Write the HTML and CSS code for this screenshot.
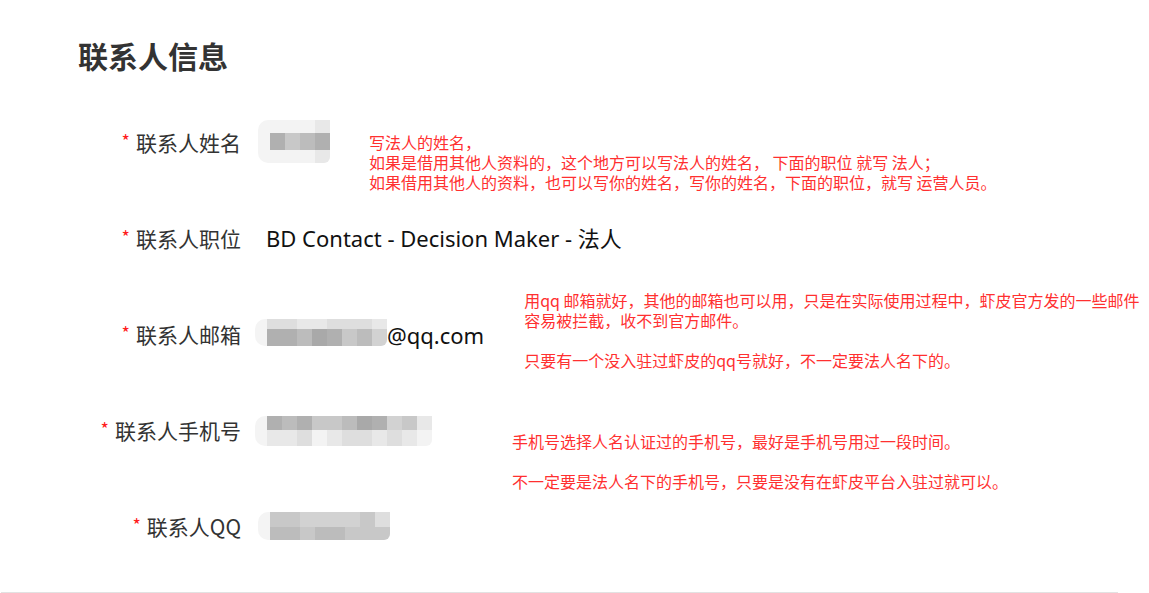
FILE: index.html
```html
<!DOCTYPE html>
<html lang="zh-CN">
<head>
<meta charset="utf-8">
<title>联系人信息</title>
<link rel="stylesheet" href="styles.css">
</head>
<body>
<div class="page">
  <h1 class="title">联系人信息</h1>

  <div class="row">
    <div class="label"><span class="req">*</span>联系人姓名</div>
    <div class="mosaic mosaic-name">
      <span class="lead"></span>
      <div class="cells cols-4">
        <i class="s9"></i><i class="s9"></i><i class="s9"></i><i class="s8"></i>
        <i class="s3"></i><i class="s5"></i><i class="s4"></i><i class="s3"></i>
        <i class="s9"></i><i class="s9"></i><i class="s9"></i><i class="s8"></i>
      </div>
    </div>
    <div class="note note-name">写法人的姓名，<br>如果是借用其他人资料的，这个地方可以写法人的姓名， 下面的职位 就写 法人；<br>如果借用其他人的资料，也可以写你的姓名，写你的姓名，下面的职位，就写 运营人员。</div>
  </div>

  <div class="row">
    <div class="label"><span class="req">*</span>联系人职位</div>
    <div class="value value-title">BD Contact - Decision Maker - 法人</div>
  </div>

  <div class="row">
    <div class="label"><span class="req">*</span>联系人邮箱</div>
    <div class="email">
      <div class="mosaic mosaic-email">
        <span class="lead"></span>
        <div class="cells cols-8 rows-email">
          <i class="s7"></i><i class="s7"></i><i class="s8"></i><i class="s8"></i><i class="s7"></i><i class="s7"></i><i class="s7"></i><i class="s8"></i>
          <i class="s3"></i><i class="s3"></i><i class="s4"></i><i class="s2"></i><i class="s3"></i><i class="s5"></i><i class="s4"></i><i class="s6"></i>
        </div>
      </div>
      <span class="value">@qq.com</span>
    </div>
    <div class="note note-email">用qq 邮箱就好，其他的邮箱也可以用，只是在实际使用过程中，虾皮官方发的一些邮件<br>容易被拦截，收不到官方邮件。<br><br>只要有一个没入驻过虾皮的qq号就好，不一定要法人名下的。</div>
  </div>

  <div class="row">
    <div class="label label-wide"><span class="req">*</span>联系人手机号</div>
    <div class="mosaic mosaic-phone">
      <span class="lead"></span>
      <div class="cells cols-11 rows-phone">
        <i class="s3"></i><i class="s4"></i><i class="s3"></i><i class="s5"></i><i class="s5"></i><i class="s4"></i><i class="s2"></i><i class="s3"></i><i class="s6"></i><i class="s5"></i><i class="s8"></i>
        <i class="s8"></i><i class="s8"></i><i class="s7"></i><i class="s9"></i><i class="s8"></i><i class="s7"></i><i class="s7"></i><i class="s8"></i><i class="s7"></i><i class="s8"></i><i class="s9"></i>
      </div>
    </div>
    <div class="note note-phone">手机号选择人名认证过的手机号，最好是手机号用过一段时间。<br><br>不一定要是法人名下的手机号，只要是没有在虾皮平台入驻过就可以。</div>
  </div>

  <div class="row">
    <div class="label"><span class="req">*</span>联系人QQ</div>
    <div class="mosaic mosaic-qq">
      <span class="lead"></span>
      <div class="cells cols-8 rows-qq">
        <i class="s5"></i><i class="s5"></i><i class="s6"></i><i class="s6"></i><i class="s6"></i><i class="s6"></i><i class="s5"></i><i class="s7"></i>
        <i class="s4"></i><i class="s4"></i><i class="s5"></i><i class="s4"></i><i class="s4"></i><i class="s5"></i><i class="s5"></i><i class="s5"></i>
      </div>
    </div>
  </div>
</div>
</body>
</html>
```

FILE: styles.css
```css
html, body {
  margin: 0;
  padding: 0;
  background: #fff;
  overflow: hidden;
}

.page {
  width: 1117px;
  height: 593px;
  margin-left: 1px;
  box-sizing: border-box;
  border-bottom: 1px solid #e2e2e2;
  font-family: "Noto Sans CJK SC", "Noto Sans", sans-serif;
  color: #333;
}

.title {
  margin: 0 0 0 77px;
  padding-top: 40px;
  height: 94px;
  box-sizing: border-box;
  font-size: 30px;
  line-height: 30px;
  font-weight: 700;
  color: #333;
}

.row {
  height: 96px;
  display: flex;
  align-items: center;
}

.label {
  width: 240px;
  flex: none;
  text-align: right;
  font-size: 21px;
  line-height: 28px;
  color: #333;
  white-space: nowrap;
}

.req {
  color: #ff1a1a;
  font-size: 18px;
  margin-right: 6px;
  position: relative;
  top: -3px;
}

.value {
  font-family: "Noto Sans", "Noto Sans CJK SC", sans-serif;
  font-size: 22px;
  line-height: 28px;
  color: #111;
  white-space: nowrap;
}

.value-title {
  margin-left: 25px;
}

.email {
  display: flex;
  align-items: center;
  margin-left: 14px;
}

.email .value {
  position: relative;
  top: 1px;
}

.mosaic {
  display: flex;
  flex: none;
  filter: blur(0.6px);
}

.mosaic .lead {
  width: 12px;
  background: #f4f4f4;
  border-radius: 10px 0 0 10px;
}

.cells {
  display: grid;
  grid-auto-rows: 14px;
}

.cells i {
  display: block;
}

.cols-4 { grid-template-columns: repeat(4, 15px); grid-template-rows: 13px 17px 13px; }
.cols-8 { grid-template-columns: repeat(8, 15px); }
.cols-11 { grid-template-columns: repeat(11, 15px); }

.rows-email { grid-template-rows: 10px 17px; }
.rows-phone { grid-template-rows: 14px 16px; }
.rows-qq { grid-template-rows: 15px 13px; }

.cells i:last-child { border-radius: 0 0 6px 0; }

.s2 { background: #a9a9a9; }
.s3 { background: #b0b0b0; }
.s4 { background: #bcbcbc; }
.s5 { background: #c8c8c8; }
.s6 { background: #d2d2d2; }
.s7 { background: #dedede; }
.s8 { background: #e8e8e8; }
.s9 { background: #f3f3f3; }

.mosaic-name {
  margin-left: 17px;
  margin-top: -2px;
}

.mosaic-email {
  margin-top: -3px;
}

.mosaic-phone {
  margin-left: 14px;
  margin-top: 2px;
}

.mosaic-qq {
  margin-left: 17px;
}

.note {
  font-family: "Noto Sans CJK SC", sans-serif;
  font-size: 16px;
  line-height: 20px;
  color: #ff3030;
  white-space: nowrap;
  align-self: flex-start;
}

.note-name {
  margin-left: 39px;
  margin-top: 38px;
}

.note-email {
  margin-left: 40px;
  margin-top: 4px;
}

.note-phone {
  margin-left: 80px;
  margin-top: 49px;
}
```
